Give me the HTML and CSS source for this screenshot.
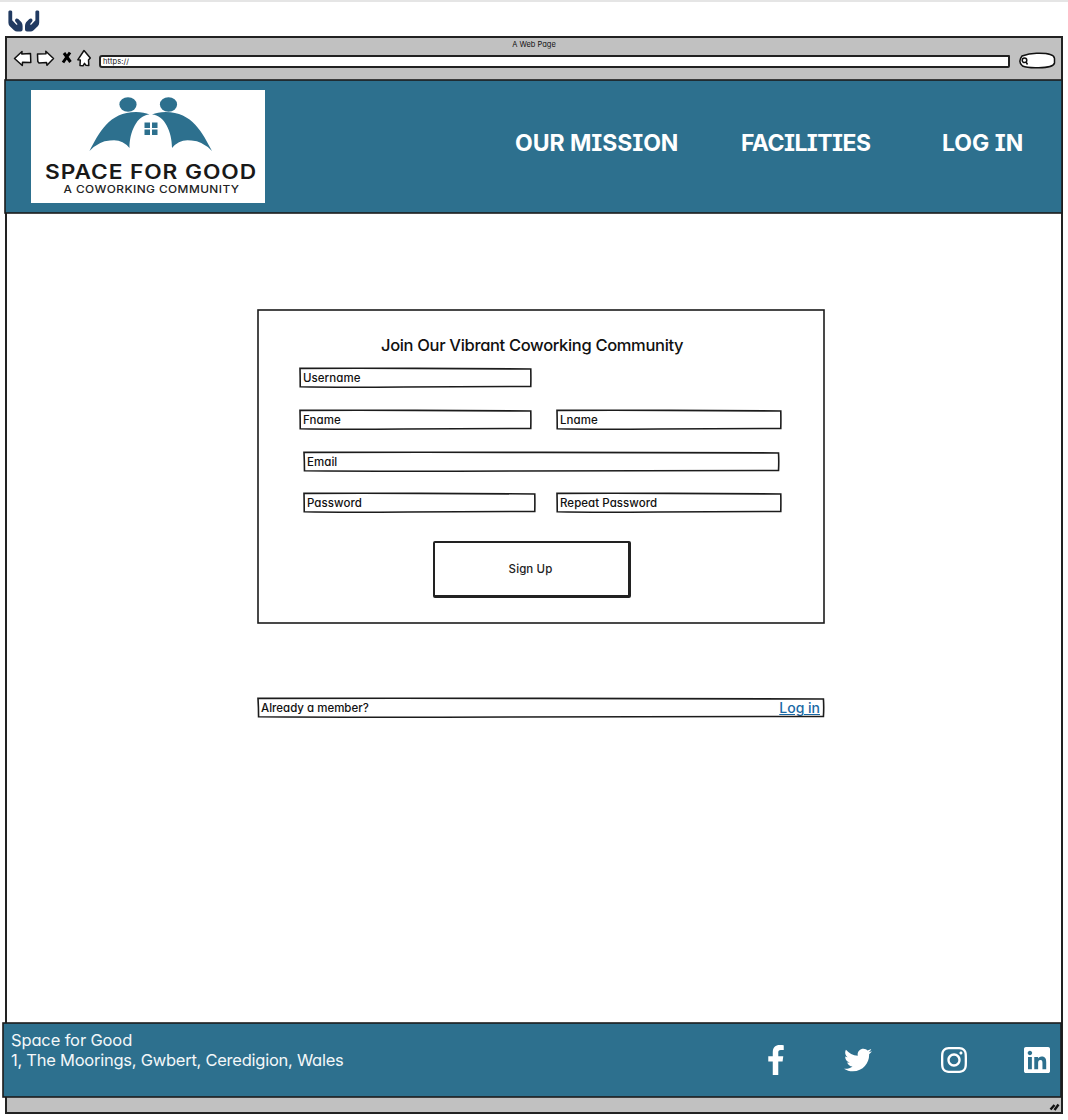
FILE: index.html
```html
<!DOCTYPE html>
<html lang="en">
<head>
<meta charset="utf-8">
<title>Space for Good – Sign up</title>
<link rel="stylesheet" href="styles.css">
</head>
<body>
<svg class="defs" width="0" height="0" aria-hidden="true">
  <symbol id="frame" viewBox="0 0 100 100" preserveAspectRatio="none">
    <path vector-effect="non-scaling-stroke" d="M0 2 Q25 1 50 2 T99.900 5 Q100 50 99.900 97 Q75 97 45 100 T.1 99 Q.1 50 0 2Z"/>
  </symbol>
</svg>
<div class="topbar">
  <svg class="hands" viewBox="0 0 32 22" aria-hidden="true">
    <g id="hand"><path d="M.4 1.800C.4.2 4.200.2 4.200 1.800V10.200L8.200 14.600C8.900 15.200 9.800 14.500 9.200 13.700L7.600 11.800C6 9.800 8.300 7.300 10.300 9L13.500 12.200Q14.600 13.800 14.600 16V19.500Q14.600 21.600 12.600 21.600H9Q7.500 21.600 6 20.200L1.600 16Q.4 14.500 .4 12.400Z"/></g>
    <use href="#hand" transform="matrix(-1 0 0 1 31.6 0)"/>
  </svg>
</div>
<div class="window">
  <div class="chrome">
    <div class="chrome-title">A Web Page</div>
    <div class="chrome-row">
      <svg class="tools" viewBox="0 0 80 20" aria-hidden="true">
        <path class="ink" d="M1.500 9.500L9 2.500 8.800 5 17.500 4.500 17.800 13.500 9.500 13.300 9.300 16.500Z"/>
        <path class="ink" d="M24.500 5L33 4.800 32.800 2.300 40.500 9.500 34 16.300 33.500 13.500 26 14 24.800 12.500Z"/>
        <path class="cross" d="M51 4L57.500 13M57 3.500L50 13.500"/>
        <path class="ink" d="M71 1.500L77.300 9 75.500 11 75.800 16.500 72.800 16.200 71.500 14.300 70 16.800 67 16.500 67.300 11 64.800 10.800Z"/>
      </svg>
      <div class="address"><span>https://</span></div>
      <svg class="search" viewBox="0 0 40 18" aria-hidden="true">
        <path class="ink" d="M4 4Q12 .8 21 1.300Q36 1.200 36.500 6.500V11Q35.500 15.800 20 15.700Q9 16 4.500 14Q-.5 10 4 4Z"/>
        <circle class="ink" cx="6.500" cy="8.300" r="2.300"/><path class="ink" d="M8 10L9.500 12.500"/>
      </svg>
    </div>
  </div>
  <header class="masthead">
    <svg class="frame"><rect width="100%" height="100%"/></svg>
    <svg class="logo" viewBox="0 0 234 113" role="img" aria-label="Space for Good, a coworking community">
      <g class="mark">
        <ellipse cx="97" cy="14.500" rx="8.600" ry="7.300"/><ellipse cx="137.500" cy="14.500" rx="8.600" ry="7.300"/>
        <path id="wing" d="M58.500 61C68 43 78 22 105 22Q113 22 118.500 24.500C106 25 98.500 42 98.500 58Q91 48.500 79 50.500Q68 51 58.500 61Z"/>
        <use href="#wing" transform="matrix(-1 0 0 1 239.500 0)"/>
        <path d="M113.500 32.500h5.500v5.500h-5.500zM121 32.500h5.500v5.500h-5.500zM113.500 39.500h5.500v5.500h-5.500zM121 39.500h5.500v5.500h-5.500z"/>
      </g>
      <text class="logo-name" x="14" y="89" textLength="212" lengthAdjust="spacingAndGlyphs">SPACE FOR GOOD</text>
      <text class="logo-tag" x="32.500" y="102.800" textLength="176" lengthAdjust="spacingAndGlyphs">A COWORKING COMMUNITY</text>
    </svg>
    <nav class="nav"><a class="mission">OUR MISSION</a><a class="facilities">FACILITIES</a><a class="login">LOG IN</a></nav>
  </header>
  <main class="page">
    <form class="card">
      <svg class="frame"><rect width="100%" height="100%"/></svg>
      <h1>Join Our Vibrant Coworking Community</h1>
      <div class="row"><div class="field half"><svg class="frame"><use href="#frame"/></svg><span>Username</span></div></div>
      <div class="row"><div class="field half"><svg class="frame"><use href="#frame"/></svg><span>Fname</span></div><div class="field other"><svg class="frame"><use href="#frame"/></svg><span>Lname</span></div></div>
      <div class="row inset"><div class="field full"><svg class="frame"><use href="#frame"/></svg><span>Email</span></div></div>
      <div class="row inset"><div class="field half"><svg class="frame"><use href="#frame"/></svg><span>Password</span></div><div class="field other"><svg class="frame"><use href="#frame"/></svg><span>Repeat Password</span></div></div>
      <button class="signup" type="button"><span>Sign Up</span></button>
    </form>
    <div class="member"><svg class="frame"><use href="#frame"/></svg><span>Already a member?</span><a>Log in</a></div>
  </main>
  <footer class="footer">
    <svg class="frame"><rect width="100%" height="100%"/></svg>
    <address><span class="org">Space for Good</span><span class="street">1, The Moorings, Gwbert, Ceredigion, Wales</span></address>
    <div class="social">
      <svg class="fb" viewBox="0 0 264 512"><path d="M76.7 512V283H0v-91h76.7v-71.7C76.7 42.4 124.3 0 193.8 0c33.3 0 61.9 2.5 70.2 3.6V85h-48.2c-37.8 0-45.1 18-45.1 44.3V192H256l-11.7 91h-73.6v229"/></svg>
      <svg class="tw" viewBox="0 0 512 512"><path d="M459.37 151.716c.325 4.548.325 9.097.325 13.645 0 138.72-105.583 298.558-298.558 298.558-59.452 0-114.68-17.219-161.137-47.106 8.447.974 16.568 1.299 25.34 1.299 49.055 0 94.213-16.568 130.274-44.832-46.132-.975-84.792-31.188-98.112-72.772 6.498.974 12.995 1.624 19.818 1.624 9.421 0 18.843-1.3 27.614-3.573-48.081-9.747-84.143-51.98-84.143-102.985v-1.299c13.969 7.797 30.214 12.67 47.431 13.319-28.264-18.843-46.781-51.005-46.781-87.391 0-19.492 5.197-37.36 14.294-52.954 51.655 63.675 129.3 105.258 216.365 109.807-1.624-7.797-2.599-15.918-2.599-24.04 0-57.828 46.782-104.934 104.934-104.934 30.213 0 57.502 12.67 76.67 33.137 23.715-4.548 46.456-13.32 66.599-25.34-7.798 24.366-24.366 44.833-46.132 57.827 21.117-2.273 41.584-8.122 60.426-16.243-14.292 20.791-32.161 39.308-52.628 54.253z"/></svg>
      <svg class="ig" viewBox="0 0 448 512"><path d="M224.1 141c-63.6 0-114.9 51.3-114.9 114.9s51.3 114.9 114.9 114.9S339 319.5 339 255.9 287.7 141 224.1 141zm0 189.6c-41.1 0-74.7-33.5-74.7-74.7s33.5-74.7 74.7-74.7 74.7 33.5 74.7 74.7-33.6 74.7-74.7 74.7zm146.4-194.3c0 14.9-12 26.8-26.8 26.8-14.9 0-26.8-12-26.8-26.8s12-26.8 26.8-26.8 26.8 12 26.8 26.8zm76.1 27.2c-1.7-35.9-9.9-67.7-36.2-93.9-26.2-26.2-58-34.4-93.9-36.2-37-2.1-147.9-2.1-184.9 0-35.8 1.7-67.6 9.9-93.9 36.1s-34.4 58-36.2 93.9c-2.1 37-2.1 147.9 0 184.9 1.7 35.9 9.9 67.7 36.2 93.9s58 34.4 93.9 36.2c37 2.1 147.9 2.1 184.9 0 35.9-1.7 67.7-9.9 93.9-36.2 26.2-26.2 34.4-58 36.2-93.9 2.1-37 2.1-147.8 0-184.800zM398.8 388c-7.8 19.6-22.9 34.7-42.6 42.6-29.5 11.7-99.5 9-132.1 9s-102.7 2.6-132.1-9c-19.6-7.8-34.7-22.9-42.6-42.6-11.7-29.5-9-99.5-9-132.1s-2.6-102.7 9-132.1c7.8-19.6 22.9-34.7 42.6-42.6 29.5-11.7 99.5-9 132.1-9s102.7-2.6 132.1 9c19.6 7.8 34.7 22.9 42.6 42.6 11.7 29.5 9 99.5 9 132.1s2.7 102.7-9 132.100z"/></svg>
      <svg class="li" viewBox="0 0 448 512"><path d="M416 32H31.9C14.3 32 0 46.5 0 64.3v383.4C0 465.5 14.3 480 31.9 480H416c17.6 0 32-14.5 32-32.3V64.3c0-17.8-14.4-32.3-32-32.300zM135.4 416H69V202.2h66.5V416zm-33.2-243c-21.3 0-38.5-17.3-38.5-38.5S80.9 96 102.2 96c21.2 0 38.5 17.3 38.5 38.5 0 21.3-17.2 38.5-38.5 38.500zm282.1 243h-66.4V312c0-24.8-.5-56.7-34.5-56.7-34.6 0-39.9 27-39.9 54.9V416h-66.4V202.2h63.7v29.2h.9c8.9-16.8 30.6-34.5 62.2-34.5 66.5 0 78.9 43.8 78.9 100.9V416z"/></svg>
    </div>
  </footer>
  <div class="statusbar">
    <svg viewBox="0 0 12 10" aria-hidden="true"><path d="M1.500 7.500L5.500 3M5.500 8L9.500 2.500"/></svg>
  </div>
</div>
</body>
</html>
```
FILE: styles.css
```css
* { box-sizing: border-box; }
body {
  margin: 0;
  width: 1068px;
  height: 1120px;
  overflow: hidden;
  background: #fff;
  color: #111;
  font-family: Inter, "Open Sans", sans-serif;
  font-feature-settings: "cv11";
  white-space: nowrap;
}
.defs { display: block; height: 0; }
.topbar { height: 36px; border-top: 2px solid #e5e5e5; padding: 8px 0 0 8px; }
.hands { display: block; width: 32px; height: 22px; fill: #213a61; }
.window { margin-left: 5px; width: 1058px; height: 1078px; border: 2px solid #222; background: #fff; }
.chrome { height: 42px; background: #c1c1c1; padding-top: 1px; }
.chrome-title { height: 10px; line-height: 11px; font-size: 7.500px; text-align: center; }
.chrome-row { display: flex; height: 24px; align-items: center; }
.tools { width: 80px; height: 20px; margin: -5px 0 0 6px; }
.ink { fill: #fff; stroke: #111; stroke-width: 1.500; stroke-linejoin: round; }
.cross { fill: none; stroke: #000; stroke-width: 3; }
.address {
  width: 911px; height: 13px; margin: 0 0 0 6px;
  border: 2px solid #222; border-radius: 3px 1px 2px 3px;
  background: #fff; font-size: 7.500px; line-height: 9px; padding-left: 2px; letter-spacing: .1px;
}
.search { width: 40px; height: 18px; margin-left: 8px; }
.frame {
  position: absolute; inset: 0; width: 100%; height: 100%;
  overflow: visible; fill: none; stroke: #1c1c1c; stroke-width: 1.600; pointer-events: none;
}
#frame { overflow: visible; }
.masthead {
  position: relative; display: flex; width: 1057px; height: 133px; margin-left: -2px;
  padding: 10px 0 0 26px; background: #2d708e;
}
.logo { width: 234px; height: 113px; background: #fff; flex: none; }
.mark { fill: #2d708e; }
.logo-name { font-size: 19.500px; font-weight: 600; letter-spacing: .8px; fill: #191919; }
.logo-tag { font-size: 10.800px; font-weight: 500; letter-spacing: .4px; fill: #222; }
.nav {
  display: flex; padding-top: 37px; color: #fff; font-size: 23px; font-weight: 700; line-height: 32px;
  font-feature-settings: "cv08", "cv11";
}
.mission { width: 226px; margin-left: 250px; letter-spacing: -.05px; }
.facilities { width: 201px; letter-spacing: -.55px; }
.page { height: 810px; padding: 97px 0 0 251px; }
.card { position: relative; width: 566px; height: 313px; padding: 25px 0 0 42px; }
h1 { margin: 0 0 11px 81px; font-size: 16.500px; font-weight: 500; line-height: 21px; letter-spacing: -.33px; }
.row { display: flex; height: 19px; margin: 0 0 23px; gap: 26px; padding-top: 1px; }
.inset { margin: 0 0 22px 4px; gap: 22px; }
.field { position: relative; height: 19px; padding-left: 3px; font-size: 11.500px; font-weight: 500; line-height: 20px; letter-spacing: .05px; }
.half { width: 231px; }
.other { width: 224px; }
.full { width: 475px; }
.signup {
  display: block; width: 198px; height: 57px; margin: 30px 0 0 133px; padding: 0 2px 0 0;
  font: inherit; font-size: 11.500px; font-weight: 500; letter-spacing: .1px; color: #222; font-feature-settings: inherit;
  background: #fff; border: solid #222; border-width: 2px 3px 3px 2px; border-radius: 2px;
}
.member {
  position: relative; display: flex; justify-content: space-between;
  width: 566px; height: 19px; margin-top: 75px; padding: 0 4px 0 3px; font-size: 11.500px; font-weight: 500; line-height: 20px;
}
.member a { color: #1a69a5; font-size: 14px; text-decoration: underline; }
.footer {
  position: relative; display: flex; justify-content: space-between;
  width: 1058px; height: 74px; margin-left: -4px; padding: 7px 11px 0 8px;
  background: #2d708e; color: #f3f7f9;
}
address { display: flex; flex-direction: column; font-style: normal; font-size: 16.500px; line-height: 20px; }
.org { letter-spacing: -.14px; }
.street { letter-spacing: -.25px; }
.social { display: flex; height: 30px; margin-top: 15px; fill: #fff; }
.social svg { height: 30px; }
.fb { width: 16px; margin-right: 60px; }
.tw { width: 28px; margin-right: 69px; }
.ig { width: 26px; margin-right: 57px; }
.li { width: 26px; }
.statusbar { display: flex; justify-content: flex-end; height: 15px; padding: 5px 0 0 0; background: #c1c1c1; }
.statusbar svg { width: 12px; height: 10px; fill: none; stroke: #111; stroke-width: 2.400; }
```
